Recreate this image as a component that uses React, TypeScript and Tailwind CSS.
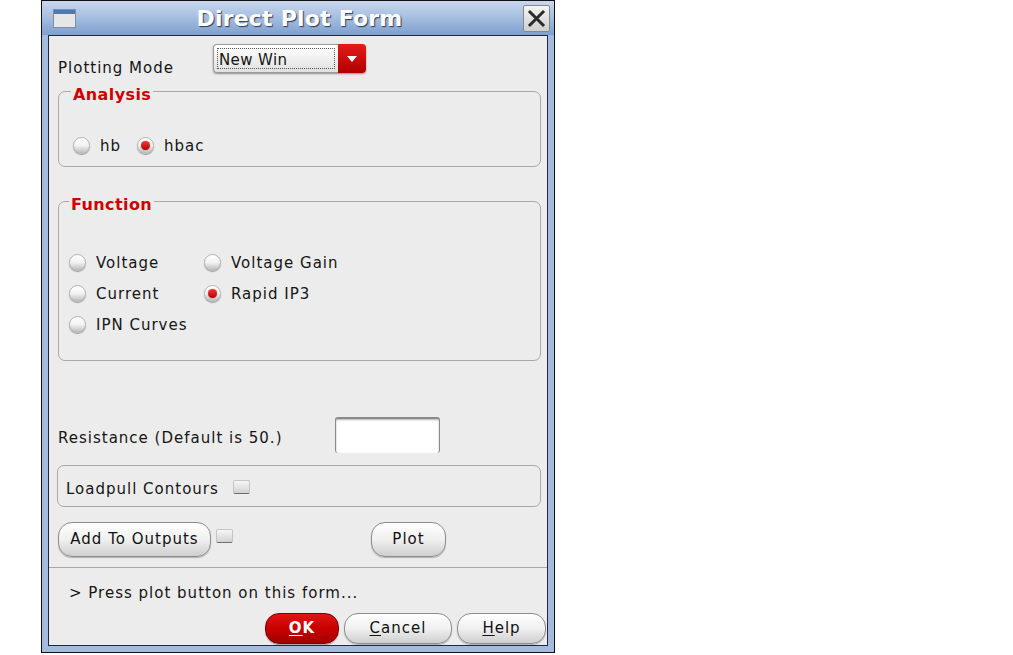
import type { ReactNode } from 'react'

const font = "font-['DejaVu_Sans',sans-serif]"

function Radio({ checked = false }: { checked?: boolean }) {
  return (
    <span className="w-[17px] h-[17px] shrink-0 rounded-full border border-[#b4b4b4] bg-linear-to-b from-[#ffffff] via-[#f2f2f2] to-[#bdbdbd] shadow-[0_1px_1px_rgba(0,0,0,0.35)] flex items-center justify-center">
      {checked && (
        <span className="w-[9px] h-[9px] rounded-full bg-linear-to-b from-[#ff3030] to-[#b00000] shadow-[0_0_1px_rgba(80,0,0,0.8)]" />
      )}
    </span>
  )
}

function RadioItem({ label, checked, className = '' }: { label: string; checked?: boolean; className?: string }) {
  return (
    <label className={`flex items-center gap-[10px] h-[18px] ${className}`}>
      <Radio checked={checked} />
      <span className="relative top-[1px]">{label}</span>
    </label>
  )
}

function Check() {
  return (
    <span className="block w-[17px] h-[14px] shrink-0 border border-[#c4c4c4] border-b-[#6e6e6e] bg-linear-to-b from-[#f6f6f6] to-[#d2d2d2] rounded-[2px]" />
  )
}

function PillBtn({ children, className = '' }: { children: ReactNode; className?: string }) {
  return (
    <button className={`h-[35px] rounded-[14px] border border-[#8c8c8c] bg-linear-to-b from-[#ffffff] via-[#f0f0f0] to-[#cfcfcf] shadow-[0_1px_1px_rgba(0,0,0,0.25)] text-[15px] tracking-[1px] text-[#111] ${className}`}>
      {children}
    </button>
  )
}

function Group({ title, children, className = '' }: { title: string; children: ReactNode; className?: string }) {
  return (
    <fieldset className={`border border-[#a9a9a9] rounded-[7px] pl-[12px] ${className}`}>
      <legend className="px-[2px] text-[16px] leading-[18px] font-bold text-[#d00000] tracking-[0.4px]">
        <span className="relative top-[4px]">{title}</span>
      </legend>
      {children}
    </fieldset>
  )
}

export default function App() {
  return (
    <div className={`bg-white w-[1013px] h-[655px] ${font}`}>
      <div className="ml-[41px] w-[514px] h-[653px] border border-[#111] bg-[#a4bbdd] flex flex-col">
        {/* title bar */}
        <div className="h-[34px] shrink-0 bg-linear-to-b from-[#c9d8ee] via-[#a4bde0] to-[#7f9fcf] flex items-center pl-[11px] pr-[4px]">
          <div className="w-[23px] h-[19px] border border-[#7d8ea8] bg-[#e6e6e6] flex flex-col">
            <div className="h-[4px] bg-[#4f78b4]" />
          </div>
          <div className="flex-1 text-center text-[22px] font-bold text-white tracking-[0.2px] [text-shadow:1px_1px_1px_#2a3a55]">
            Direct Plot Form
          </div>
          <div className="w-[27px] h-[27px] border border-[#888] rounded-[2px] bg-linear-to-b from-[#f4f4f4] to-[#cfcfcf] flex items-center justify-center">
            <svg width="19" height="19" viewBox="0 0 19 19">
              <path d="M3 3 L16 16 M16 3 L3 16" stroke="#2a2a2a" strokeWidth="3" strokeLinecap="square" />
            </svg>
          </div>
        </div>

        {/* body */}
        <div className="mx-[6px] mb-[6px] flex-1 border border-[#1e2a3c] bg-[#ececec] text-[15px] tracking-[1px] text-[#151515] flex flex-col pl-[9px] pr-[6px]">
          <div className="flex items-start mt-[8px] h-[29px]">
            <span className="mt-[15px] leading-[18px] w-[155px]">Plotting Mode</span>
            <div className="w-[153px] h-[29px] flex rounded-[4px] shadow-[0_1px_2px_rgba(0,0,0,0.4)]">
              <div className="flex-1 border border-[#9a9a9a] border-r-0 rounded-l-[4px] bg-linear-to-b from-[#ffffff] to-[#e0e0e0] p-[3px]">
                <div className="h-full border border-dotted border-[#555] flex items-center pl-[1px] pt-[4px] leading-none tracking-[0.4px]">
                  New Win
                </div>
              </div>
              <div className="w-[28px] rounded-r-[4px] bg-linear-to-b from-[#e41a1a] to-[#b00000] flex items-center justify-center">
                <svg width="10" height="6" viewBox="0 0 10 6">
                  <path d="M0 0 H10 L5 6 Z" fill="#fff" />
                </svg>
              </div>
            </div>
          </div>

          <Group title="Analysis" className="mt-[9px] pb-[12px]">
            <div className="flex items-center pt-[36px] ml-[2px]">
              <RadioItem label="hb" checked={false} />
              <RadioItem label="hbac" checked className="ml-[16px]" />
            </div>
          </Group>

          <Group title="Function" className="mt-[25px] pb-[27px] !pl-[10px]">
            <div className="pt-[43px] grid grid-cols-[135px_1fr] gap-y-[13px]">
              <RadioItem label="Voltage" />
              <RadioItem label="Voltage Gain" />
              <RadioItem label="Current" />
              <RadioItem label="Rapid IP3" checked />
              <RadioItem label="IPN Curves" />
            </div>
          </Group>

          <div className="flex items-center mt-[56px] h-[36px]">
            <span className="w-[277px] leading-[18px] relative top-[3px]">Resistance (Default is 50.)</span>
            <div className="w-[105px] h-[36px] bg-white rounded-[3px] border-t-2 border-l border-r border-[#8a8a8a] border-b-0 shadow-[inset_0_1px_2px_rgba(0,0,0,0.3)]" />
          </div>

          <div className="mt-[12px] -ml-[1px] h-[42px] border border-[#a9a9a9] rounded-[7px] flex items-center pl-[8px] pt-[6px] gap-[14px]">
            <span>Loadpull Contours</span>
            <span className="-mt-[4px]">
              <Check />
            </span>
          </div>

          <div className="mt-[15px] flex items-start">
            <PillBtn className="w-[153px]">Add To Outputs</PillBtn>
            <span className="ml-[5px] mt-[7px]">
              <Check />
            </span>
            <PillBtn className="ml-[138px] w-[75px]">Plot</PillBtn>
          </div>

          <div className="mt-[10px] -ml-[9px] -mr-[6px] h-px bg-[#a8a8a8]" />

          <div className="mt-[16px] pl-[11px] leading-[18px]">&gt; Press plot button on this form...</div>

          <div className="mt-[11px] flex justify-end gap-[5px] -mr-[5px]">
            <button className="w-[74px] h-[31px] rounded-[14px] border border-[#7a0000] bg-linear-to-b from-[#e21414] via-[#c80000] to-[#a40000] text-white font-bold text-[15px] tracking-[1px] shadow-[0_1px_1px_rgba(0,0,0,0.3)]">
              <span className="underline underline-offset-2">O</span>K
            </button>
            <PillBtn className="!h-[31px] w-[108px]">
              <span className="underline underline-offset-2">C</span>ancel
            </PillBtn>
            <PillBtn className="!h-[31px] w-[89px]">
              <span className="underline underline-offset-2">H</span>elp
            </PillBtn>
          </div>
        </div>
      </div>
    </div>
  )
}
